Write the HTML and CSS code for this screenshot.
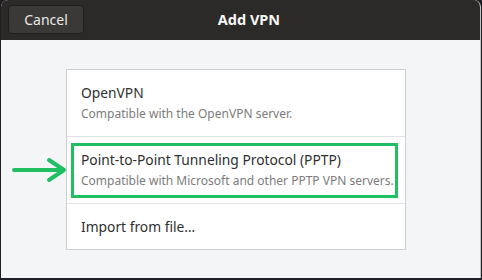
FILE: index.html
```html
<!DOCTYPE html>
<html lang="en">
  <head>
    <meta charset="UTF-8" />
    <meta name="viewport" content="width=device-width, initial-scale=1.0" />
    <title>Add VPN</title>
    <link rel="stylesheet" href="styles.css">
  </head>
  <body>
    <div class="window">
      <header class="headerbar">
        <button class="cancel">Cancel</button>
        <h1 class="title">Add VPN</h1>
      </header>
      <main class="content">
        <div class="pointer">
          <svg width="58" height="26" viewBox="0 0 58 26">
            <path d="M5 13 H54 M40 3 L55 13 L40 23" fill="none" stroke="#1fbf62" stroke-width="4" stroke-linecap="round" stroke-linejoin="round" />
          </svg>
        </div>
        <ul class="vpn-list">
          <li class="vpn-row">
            <span class="vpn-name">OpenVPN</span>
            <span class="vpn-desc">Compatible with the OpenVPN server.</span>
          </li>
          <li class="vpn-row highlighted">
            <span class="vpn-name">Point-to-Point Tunneling Protocol (PPTP)</span>
            <span class="vpn-desc">Compatible with Microsoft and other PPTP VPN servers.</span>
          </li>
          <li class="vpn-row import">
            <span class="vpn-name">Import from file…</span>
          </li>
        </ul>
      </main>
    </div>
  </body>
</html>
```

FILE: styles.css
```css
body {
  margin: 0;
  background-color: #1d1f24;
  font-family: "Noto Sans", "Open Sans", sans-serif;
  height: 280px;
  overflow: hidden;
}

.window {
  width: 479px;
  height: 278px;
  margin-left: 1px;
  border-right: 1px solid #c4c4c4;
  border-radius: 7px 7px 0 0;
  overflow: hidden;
  display: flex;
  flex-direction: column;
  background-color: #f4f5f6;
}

.headerbar {
  height: 40px;
  flex-shrink: 0;
  background-color: #2c2a28;
  display: flex;
  align-items: center;
}

.cancel {
  margin-left: 7px;
  width: 76px;
  height: 29px;
  margin-top: -2px;
  background-color: #3b3937;
  border: 1px solid #1f1e1c;
  border-radius: 4px;
  color: #e8e8e7;
  font-family: inherit;
  font-size: 14px;
  padding: 0;
}

.title {
  flex: 1;
  margin: -2px 0 0 0;
  padding-right: 66px;
  text-align: center;
  color: #f6f6f5;
  font-size: 14.5px;
  font-weight: bold;
}

.content {
  flex: 1;
  display: flex;
  align-items: flex-start;
  padding-top: 29px;
}

.pointer {
  width: 65px;
  padding-top: 88px;
  display: flex;
  justify-content: flex-end;
}

.pointer svg {
  display: block;
  margin-right: -1px;
}

.vpn-list {
  list-style: none;
  margin: 0;
  padding: 0;
  width: 338px;
  background-color: #ffffff;
  border: 1px solid #cfcfcf;
}

.vpn-row {
  display: flex;
  flex-direction: column;
  justify-content: center;
  height: 66px;
  padding-left: 14px;
  border-bottom: 1px solid #e3e3e3;
  position: relative;
}

.vpn-row:last-child {
  border-bottom: none;
}

.vpn-row.import {
  height: 45px;
}

.vpn-row.highlighted::after {
  content: "";
  position: absolute;
  left: 4px;
  right: 7px;
  top: 6px;
  bottom: 5px;
  border: 3px solid #1fbf62;
}

.vpn-name {
  color: #2f2f2f;
  font-size: 13.8px;
  line-height: 18px;
}

.vpn-desc {
  color: #7c7c7c;
  font-size: 12px;
  line-height: 16px;
  margin-top: 4px;
}
```
